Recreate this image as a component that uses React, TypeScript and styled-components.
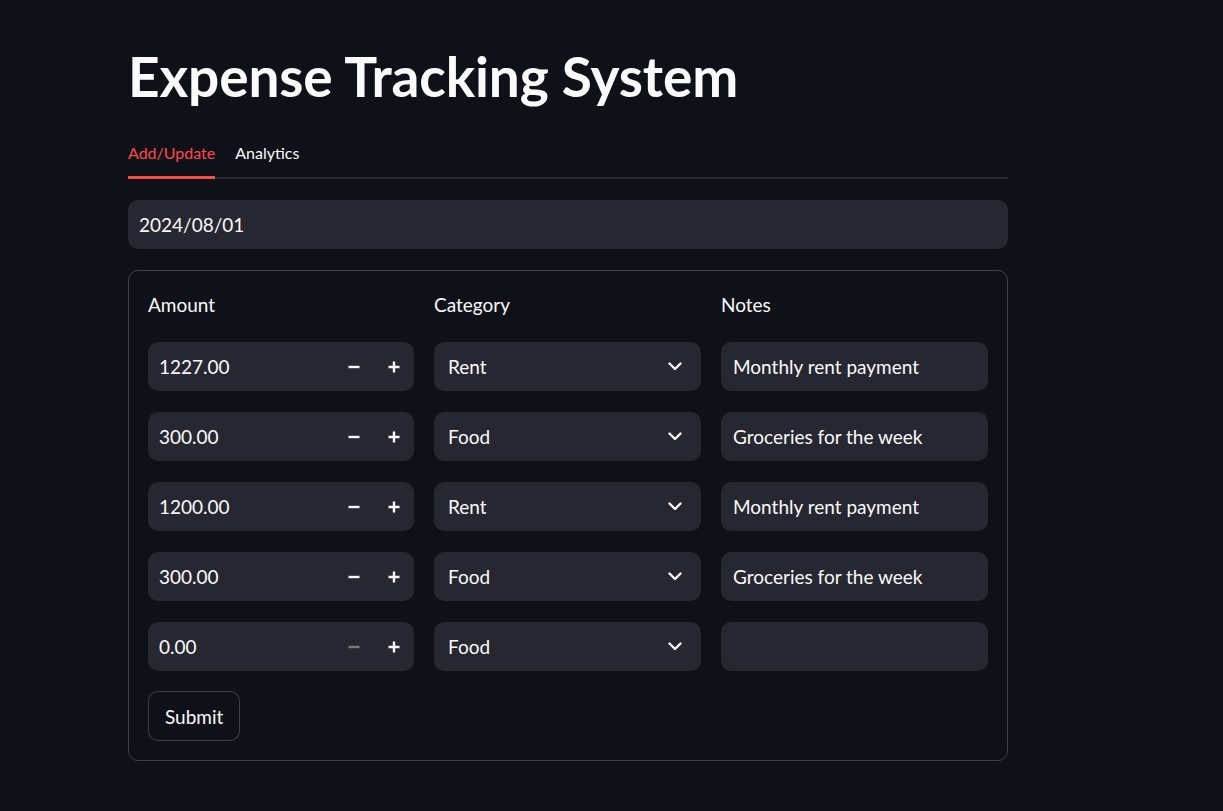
import React, { useState } from "react";
import styled, { createGlobalStyle } from "styled-components";

const GlobalStyle = createGlobalStyle`
  html, body {
    margin: 0;
    padding: 0;
    background: #0e1117;
    color: #fafafa;
    font-family: Lato, "Noto Sans", sans-serif;
  }
  * { box-sizing: border-box; }
`;

interface Expense {
  amount: number;
  category: string;
  notes: string;
}

const expenses: Expense[] = [
  { amount: 1227, category: "Rent", notes: "Monthly rent payment" },
  { amount: 300, category: "Food", notes: "Groceries for the week" },
  { amount: 1200, category: "Rent", notes: "Monthly rent payment" },
  { amount: 300, category: "Food", notes: "Groceries for the week" },
  { amount: 0, category: "Food", notes: "" },
];

export default function App() {
  const [tab, setTab] = useState("add");

  return (
    <>
      <GlobalStyle />
      <Main>
        <Title>Expense Tracking System</Title>
        <TabBar>
          <Tab active={tab === "add"} onClick={() => setTab("add")}>
            Add/Update
          </Tab>
          <Tab active={tab === "analytics"} onClick={() => setTab("analytics")}>
            Analytics
          </Tab>
        </TabBar>
        <DateField>2024/08/01</DateField>
        <FormBox>
          <Grid>
            <Label>Amount</Label>
            <Label>Category</Label>
            <Label>Notes</Label>
            {expenses.map((e, i) => (
              <React.Fragment key={i}>
                <NumberField>
                  <FieldText>{e.amount.toFixed(2)}</FieldText>
                  <StepButton disabled={e.amount <= 0}>
                    <MinusIcon />
                  </StepButton>
                  <StepButton>
                    <PlusIcon />
                  </StepButton>
                </NumberField>
                <SelectField>
                  <FieldText>{e.category}</FieldText>
                  <Chevron />
                </SelectField>
                <TextField>{e.notes}</TextField>
              </React.Fragment>
            ))}
          </Grid>
          <SubmitButton>Submit</SubmitButton>
        </FormBox>
      </Main>
    </>
  );
}

const MinusIcon = () => (
  <svg width="12" height="12" viewBox="0 0 12 12">
    <path d="M0.5 6h11" stroke="currentColor" strokeWidth="2.4" />
  </svg>
);

const PlusIcon = () => (
  <svg width="12" height="12" viewBox="0 0 12 12">
    <path d="M0.5 6h11M6 0.5v11" stroke="currentColor" strokeWidth="2.4" />
  </svg>
);

const Chevron = () => (
  <ChevronSvg width="14" height="9" viewBox="0 0 14 9">
    <path
      d="M1.5 1.5L7 7l5.5-5.5"
      fill="none"
      stroke="currentColor"
      strokeWidth="2.4"
      strokeLinecap="round"
      strokeLinejoin="round"
    />
  </ChevronSvg>
);

const Main = styled.main`
  width: 880px;
  margin-left: 128px;
  padding-top: 40px;
  padding-bottom: 50px;
`;

const Title = styled.h1`
  margin: 0;
  font-size: 55px;
  font-weight: 700;
  line-height: 72px;
  letter-spacing: -0.13px;
`;

const TabBar = styled.div`
  display: flex;
  gap: 20px;
  margin-top: 29px;
  border-bottom: 2px solid #262730;
`;

const Tab = styled.div<{ active?: boolean }>`
  font-size: 16px;
  line-height: 24px;
  padding-bottom: 11px;
  margin-bottom: -2px;
  color: ${({ active }) => (active ? "#ff4b4b" : "#fafafa")};
  border-bottom: 3px solid ${({ active }) => (active ? "#ff4b4b" : "transparent")};
  cursor: pointer;
`;

const fieldBase = `
  height: 49px;
  background: #262730;
  border-radius: 10px;
  font-size: 19px;
  color: #fafafa;
  display: flex;
  align-items: center;
`;

const DateField = styled.div`
  ${fieldBase}
  margin-top: 21px;
  padding-left: 11px;
`;

const FormBox = styled.div`
  margin-top: 21px;
  border: 1px solid rgba(250, 250, 250, 0.2);
  border-radius: 10px;
  padding: 19px 19px 19px 19px;
`;

const Grid = styled.div`
  display: grid;
  grid-template-columns: 266px 267px 267px;
  column-gap: 20px;
  row-gap: 21px;
`;

const Label = styled.div`
  font-size: 19px;
  line-height: 30px;
  margin-bottom: 1px;
`;

const NumberField = styled.div`
  ${fieldBase}
  padding-left: 11px;
`;

const FieldText = styled.span`
  flex: 1;
`;

const StepButton = styled.button<{ disabled?: boolean }>`
  width: 40px;
  height: 100%;
  border: none;
  background: transparent;
  padding: 0;
  display: flex;
  align-items: center;
  justify-content: center;
  color: ${({ disabled }) => (disabled ? "rgba(250, 250, 250, 0.4)" : "#fafafa")};
`;

const SelectField = styled.div`
  ${fieldBase}
  padding: 0 19px 0 14px;
`;

const ChevronSvg = styled.svg`
  color: #fafafa;
`;

const TextField = styled.div`
  ${fieldBase}
  padding-left: 12px;
`;

const SubmitButton = styled.button`
  margin-top: 20px;
  height: 50px;
  padding: 0 16px;
  background: #0e1117;
  color: #fafafa;
  border: 1px solid rgba(250, 250, 250, 0.2);
  border-radius: 10px;
  font-family: inherit;
  font-size: 19px;
  cursor: pointer;
`;
